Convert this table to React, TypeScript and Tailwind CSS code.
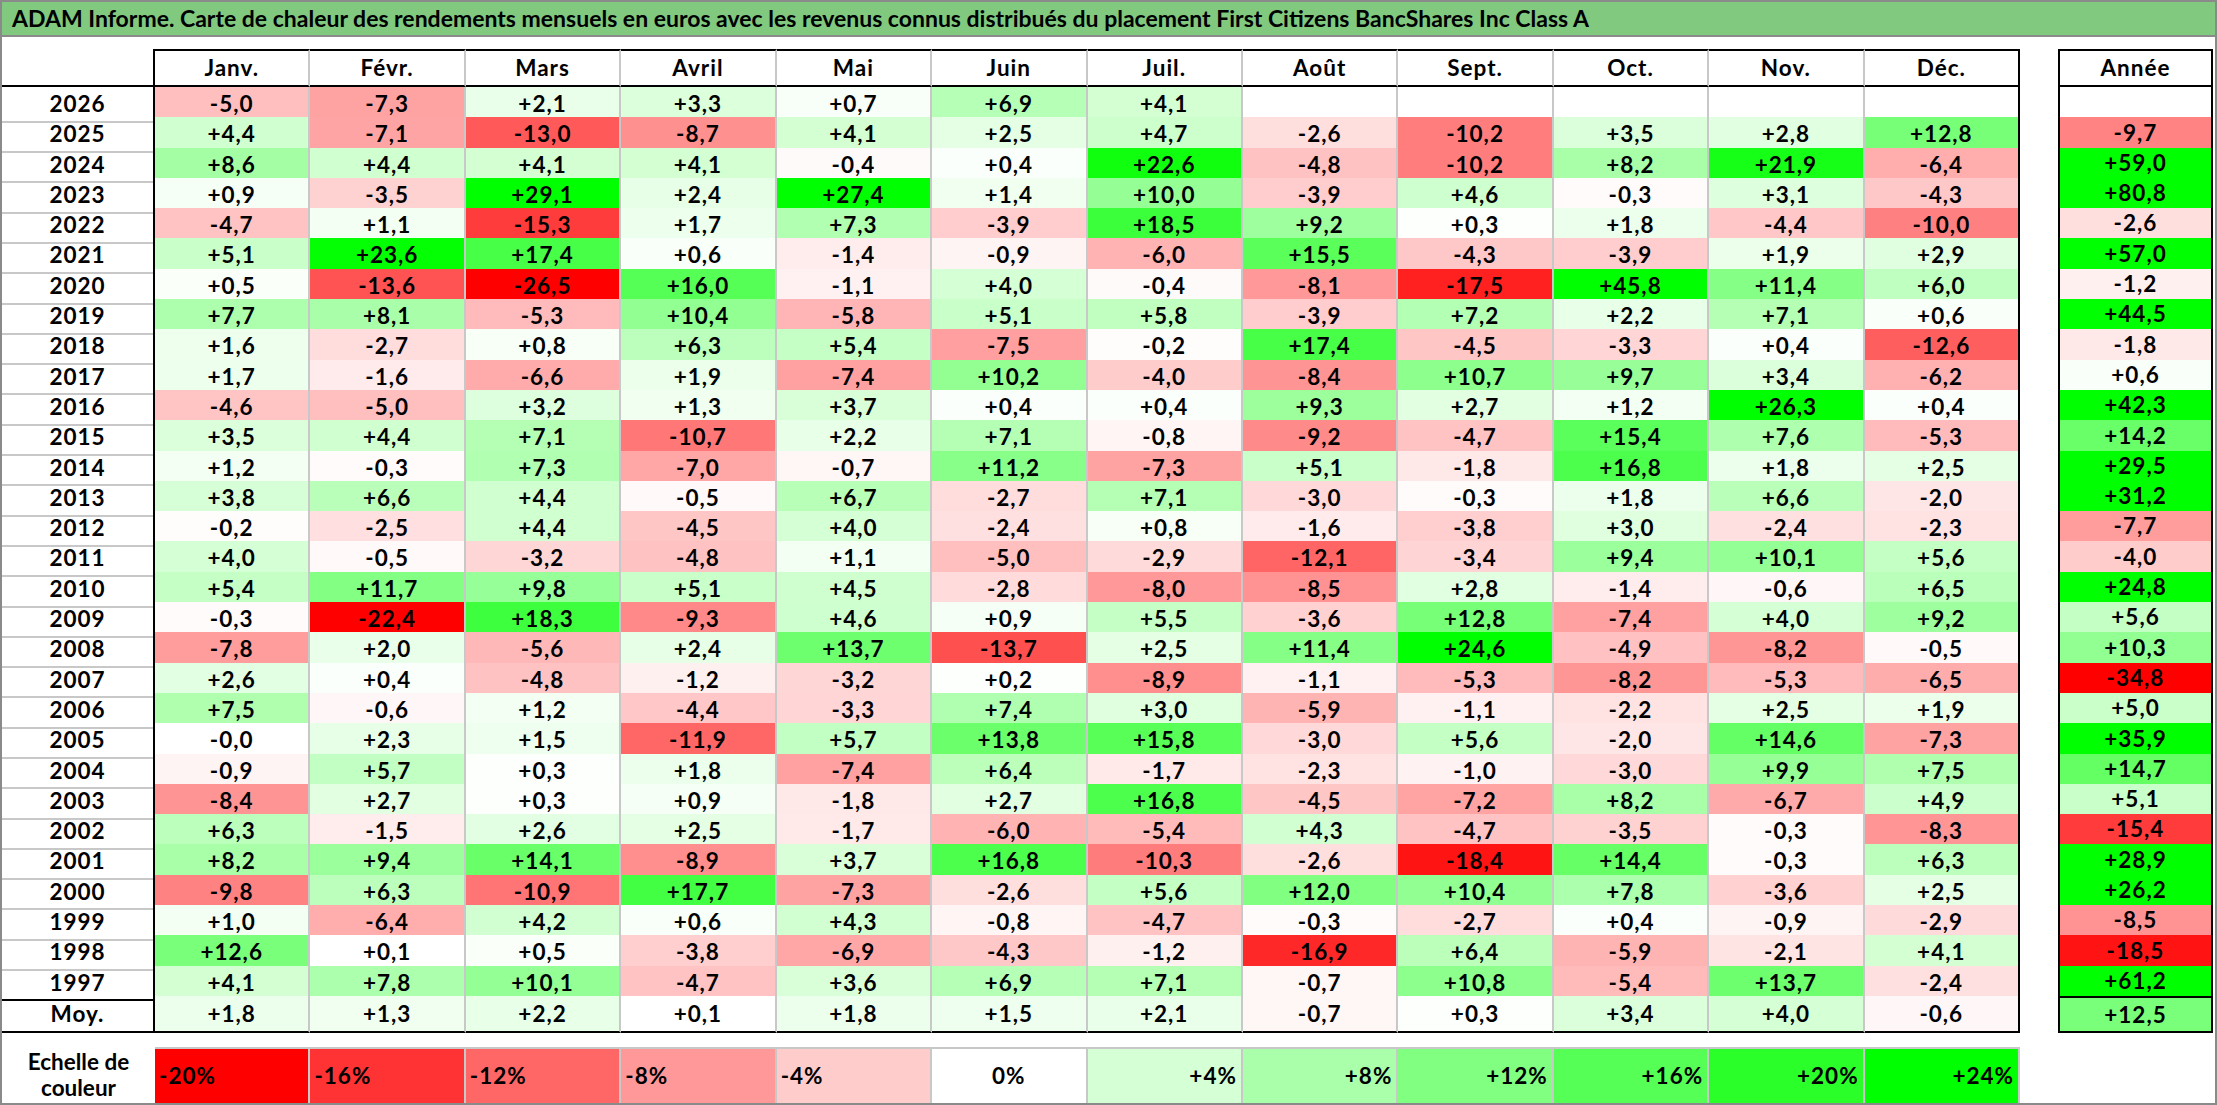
import React from 'react';

const MONTHS = ['Janv.', 'Févr.', 'Mars', 'Avril', 'Mai', 'Juin', 'Juil.', 'Août', 'Sept.', 'Oct.', 'Nov.', 'Déc.'];

// year, 12 monthly values, yearly total ('' = empty cell)
const ROWS: [string, string[], string][] = [
  ['2026', ['-5,0', '-7,3', '+2,1', '+3,3', '+0,7', '+6,9', '+4,1', '', '', '', '', ''], ''],
  ['2025', ['+4,4', '-7,1', '-13,0', '-8,7', '+4,1', '+2,5', '+4,7', '-2,6', '-10,2', '+3,5', '+2,8', '+12,8'], '-9,7'],
  ['2024', ['+8,6', '+4,4', '+4,1', '+4,1', '-0,4', '+0,4', '+22,6', '-4,8', '-10,2', '+8,2', '+21,9', '-6,4'], '+59,0'],
  ['2023', ['+0,9', '-3,5', '+29,1', '+2,4', '+27,4', '+1,4', '+10,0', '-3,9', '+4,6', '-0,3', '+3,1', '-4,3'], '+80,8'],
  ['2022', ['-4,7', '+1,1', '-15,3', '+1,7', '+7,3', '-3,9', '+18,5', '+9,2', '+0,3', '+1,8', '-4,4', '-10,0'], '-2,6'],
  ['2021', ['+5,1', '+23,6', '+17,4', '+0,6', '-1,4', '-0,9', '-6,0', '+15,5', '-4,3', '-3,9', '+1,9', '+2,9'], '+57,0'],
  ['2020', ['+0,5', '-13,6', '-26,5', '+16,0', '-1,1', '+4,0', '-0,4', '-8,1', '-17,5', '+45,8', '+11,4', '+6,0'], '-1,2'],
  ['2019', ['+7,7', '+8,1', '-5,3', '+10,4', '-5,8', '+5,1', '+5,8', '-3,9', '+7,2', '+2,2', '+7,1', '+0,6'], '+44,5'],
  ['2018', ['+1,6', '-2,7', '+0,8', '+6,3', '+5,4', '-7,5', '-0,2', '+17,4', '-4,5', '-3,3', '+0,4', '-12,6'], '-1,8'],
  ['2017', ['+1,7', '-1,6', '-6,6', '+1,9', '-7,4', '+10,2', '-4,0', '-8,4', '+10,7', '+9,7', '+3,4', '-6,2'], '+0,6'],
  ['2016', ['-4,6', '-5,0', '+3,2', '+1,3', '+3,7', '+0,4', '+0,4', '+9,3', '+2,7', '+1,2', '+26,3', '+0,4'], '+42,3'],
  ['2015', ['+3,5', '+4,4', '+7,1', '-10,7', '+2,2', '+7,1', '-0,8', '-9,2', '-4,7', '+15,4', '+7,6', '-5,3'], '+14,2'],
  ['2014', ['+1,2', '-0,3', '+7,3', '-7,0', '-0,7', '+11,2', '-7,3', '+5,1', '-1,8', '+16,8', '+1,8', '+2,5'], '+29,5'],
  ['2013', ['+3,8', '+6,6', '+4,4', '-0,5', '+6,7', '-2,7', '+7,1', '-3,0', '-0,3', '+1,8', '+6,6', '-2,0'], '+31,2'],
  ['2012', ['-0,2', '-2,5', '+4,4', '-4,5', '+4,0', '-2,4', '+0,8', '-1,6', '-3,8', '+3,0', '-2,4', '-2,3'], '-7,7'],
  ['2011', ['+4,0', '-0,5', '-3,2', '-4,8', '+1,1', '-5,0', '-2,9', '-12,1', '-3,4', '+9,4', '+10,1', '+5,6'], '-4,0'],
  ['2010', ['+5,4', '+11,7', '+9,8', '+5,1', '+4,5', '-2,8', '-8,0', '-8,5', '+2,8', '-1,4', '-0,6', '+6,5'], '+24,8'],
  ['2009', ['-0,3', '-22,4', '+18,3', '-9,3', '+4,6', '+0,9', '+5,5', '-3,6', '+12,8', '-7,4', '+4,0', '+9,2'], '+5,6'],
  ['2008', ['-7,8', '+2,0', '-5,6', '+2,4', '+13,7', '-13,7', '+2,5', '+11,4', '+24,6', '-4,9', '-8,2', '-0,5'], '+10,3'],
  ['2007', ['+2,6', '+0,4', '-4,8', '-1,2', '-3,2', '+0,2', '-8,9', '-1,1', '-5,3', '-8,2', '-5,3', '-6,5'], '-34,8'],
  ['2006', ['+7,5', '-0,6', '+1,2', '-4,4', '-3,3', '+7,4', '+3,0', '-5,9', '-1,1', '-2,2', '+2,5', '+1,9'], '+5,0'],
  ['2005', ['-0,0', '+2,3', '+1,5', '-11,9', '+5,7', '+13,8', '+15,8', '-3,0', '+5,6', '-2,0', '+14,6', '-7,3'], '+35,9'],
  ['2004', ['-0,9', '+5,7', '+0,3', '+1,8', '-7,4', '+6,4', '-1,7', '-2,3', '-1,0', '-3,0', '+9,9', '+7,5'], '+14,7'],
  ['2003', ['-8,4', '+2,7', '+0,3', '+0,9', '-1,8', '+2,7', '+16,8', '-4,5', '-7,2', '+8,2', '-6,7', '+4,9'], '+5,1'],
  ['2002', ['+6,3', '-1,5', '+2,6', '+2,5', '-1,7', '-6,0', '-5,4', '+4,3', '-4,7', '-3,5', '-0,3', '-8,3'], '-15,4'],
  ['2001', ['+8,2', '+9,4', '+14,1', '-8,9', '+3,7', '+16,8', '-10,3', '-2,6', '-18,4', '+14,4', '-0,3', '+6,3'], '+28,9'],
  ['2000', ['-9,8', '+6,3', '-10,9', '+17,7', '-7,3', '-2,6', '+5,6', '+12,0', '+10,4', '+7,8', '-3,6', '+2,5'], '+26,2'],
  ['1999', ['+1,0', '-6,4', '+4,2', '+0,6', '+4,3', '-0,8', '-4,7', '-0,3', '-2,7', '+0,4', '-0,9', '-2,9'], '-8,5'],
  ['1998', ['+12,6', '+0,1', '+0,5', '-3,8', '-6,9', '-4,3', '-1,2', '-16,9', '+6,4', '-5,9', '-2,1', '+4,1'], '-18,5'],
  ['1997', ['+4,1', '+7,8', '+10,1', '-4,7', '+3,6', '+6,9', '+7,1', '-0,7', '+10,8', '-5,4', '+13,7', '-2,4'], '+61,2'],
];

const AVERAGES = ['+1,8', '+1,3', '+2,2', '+0,1', '+1,8', '+1,5', '+2,1', '-0,7', '+0,3', '+3,4', '+4,0', '-0,6'];
const AVERAGE_YEAR = '+12,5';

const SCALE = [-20, -16, -12, -8, -4, 0, 4, 8, 12, 16, 20, 24];

// red below zero (full at -20), green above (full at +24)
const heat = (value: string | number): string => {
  if (value === '') return '#ffffff';
  const v = typeof value === 'number' ? value : parseFloat(value.replace(',', '.'));
  if (v < 0) {
    const c = Math.round(255 * (1 - Math.min(1, -v / 20)));
    return `rgb(255,${c},${c})`;
  }
  const c = Math.round(255 * (1 - Math.min(1, v / 24)));
  return `rgb(${c},255,${c})`;
};

const rowGrid = 'grid grid-cols-[153px_repeat(12,minmax(0,1fr))]';

const App: React.FC = () => {
  return (
    <div className="h-[1105px] w-[2217px] overflow-hidden border-2 border-[#8a8a8a] bg-white font-['Lato',sans-serif] font-bold text-black">
      <div className="flex h-[35px] items-center border-b-2 border-[#8a8a8a] bg-[#80c97f] pl-[10px] text-[23px]">
        ADAM Informe. Carte de chaleur des rendements mensuels en euros avec les revenus connus distribués du placement First Citizens BancShares Inc Class A
      </div>

      <div className="mt-[12px] flex gap-[38px] text-[22.5px] tracking-[1px]">
        {/* Monthly table */}
        <div className="w-[2018px]">
          <div className={`${rowGrid} h-[38px]`}>
            <div className="border-r-2 border-b-2 border-black" />
            {MONTHS.map((m, i) => (
              <div
                key={m}
                className={`flex items-center justify-center border-t-2 border-r-2 border-b-2 border-black ${i < 11 ? 'border-r-[#c8c8c8]' : ''}`}
              >
                {m}
              </div>
            ))}
          </div>

          {ROWS.map(([year, values], r) => {
            const last = r === ROWS.length - 1;
            return (
              <div key={year} className={`${rowGrid} h-[30.3px]`}>
                <div
                  className={`flex items-center justify-center border-r-2 border-b-2 border-r-black ${last ? 'border-b-black' : 'border-b-[#c8c8c8]'}`}
                >
                  {year}
                </div>
                {values.map((v, i) => (
                  <div
                    key={i}
                    style={{ backgroundColor: heat(v) }}
                    className={`flex items-center justify-center border-r-2 border-b-2 ${i < 11 ? 'border-r-[#c8c8c8]' : 'border-r-black'} ${last ? 'border-b-black' : 'border-b-[#c8c8c8]'}`}
                  >
                    {v}
                  </div>
                ))}
              </div>
            );
          })}

          <div className={`${rowGrid} h-[37px]`}>
            <div className="flex items-center justify-center border-r-2 border-b-2 border-black">Moy.</div>
            {AVERAGES.map((v, i) => (
              <div
                key={i}
                style={{ backgroundColor: heat(v) }}
                className={`flex items-center justify-center border-r-2 border-b-2 border-b-black ${i < 11 ? 'border-r-[#c8c8c8]' : 'border-r-black'}`}
              >
                {v}
              </div>
            ))}
          </div>
        </div>

        {/* Yearly column */}
        <div className="w-[155px]">
          <div className="flex h-[38px] items-center justify-center border-2 border-black">Année</div>
          {ROWS.map(([year, , total]) => (
            <div
              key={year}
              style={{ backgroundColor: heat(total) }}
              className="flex h-[30.3px] items-center justify-center border-x-2 border-black"
            >
              {total}
            </div>
          ))}
          <div
            style={{ backgroundColor: heat(AVERAGE_YEAR) }}
            className="flex h-[37px] items-center justify-center border-2 border-black"
          >
            {AVERAGE_YEAR}
          </div>
        </div>
      </div>

      {/* Colour scale */}
      <div className={`${rowGrid} mt-[14px] h-[56px] w-[2018px] text-[22.5px] tracking-[1px]`}>
        <div className="flex flex-col items-center justify-center leading-[26px] tracking-normal">
          <span>Echelle de</span>
          <span>couleur</span>
        </div>
        {SCALE.map((s) => (
          <div
            key={s}
            style={{ backgroundColor: heat(s) }}
            className={`flex items-center border-t-2 border-r-2 border-[#c8c8c8] px-[4px] ${s < 0 ? 'justify-start' : s === 0 ? 'justify-center' : 'justify-end'}`}
          >
            {s > 0 ? `+${s}%` : `${s}%`}
          </div>
        ))}
      </div>
    </div>
  );
};

export default App;
